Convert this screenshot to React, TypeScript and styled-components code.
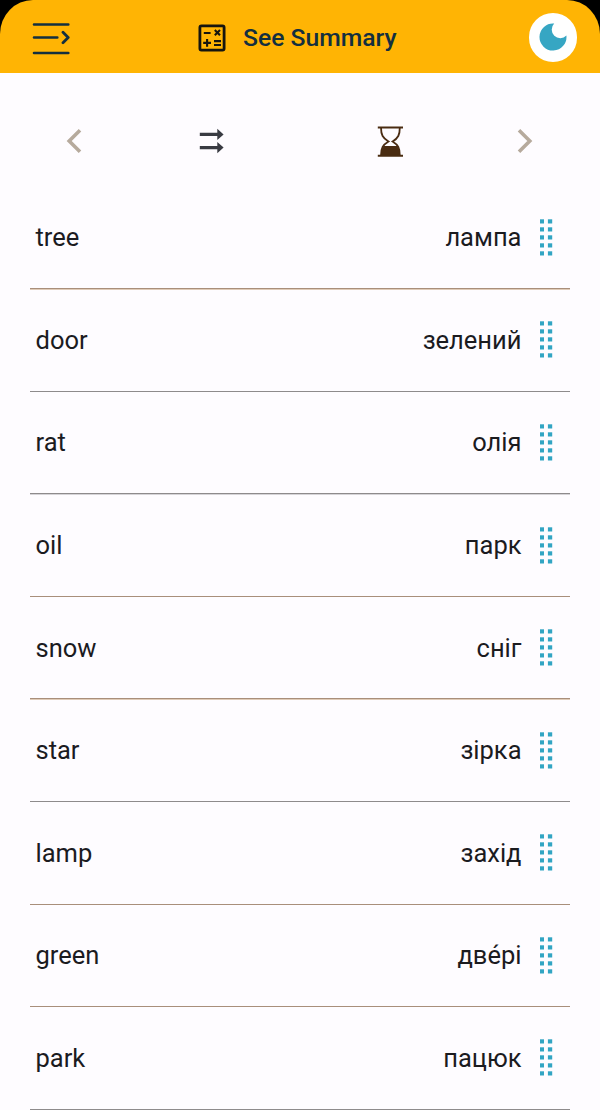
import React from 'react';
import styled, { createGlobalStyle } from 'styled-components';

const GlobalStyle = createGlobalStyle`
  * { box-sizing: border-box; }
  body { margin: 0; background: #000; font-family: Roboto, "Noto Sans", sans-serif; }
  button { border: 0; padding: 0; background: none; display: flex; }
  svg { display: block; }
`;

const Screen = styled.main`
  width: 600px;
  height: 1110px;
  overflow: hidden;
  background: #fefcff;
`;

const HeaderBack = styled.div`
  background: #000;
`;

const Header = styled.header`
  height: 72.5px;
  display: grid;
  grid-template-columns: 120px 1fr 120px;
  align-items: center;
  padding: 5px 23px 0 31px;
  background: #ffb404;
  border-radius: 33px 33px 0 0 / 34px 34px 0 0;
`;

const Title = styled.h1`
  margin: -2px 0 0 -13px;
  display: flex;
  align-items: center;
  justify-content: center;
  gap: 16.5px;
  font-size: 24.7px;
  font-weight: 500;
  line-height: 30px;
  color: #132f3f;
  white-space: nowrap;
`;

const ThemeButton = styled.button`
  justify-self: end;
  width: 48.5px;
  height: 48.5px;
  margin-top: -3px;
  border-radius: 50%;
  background: #fff;
  align-items: center;
  justify-content: center;
`;

const Toolbar = styled.nav`
  height: 114.05px;
  padding: 23px 67px 0 66px;
  display: flex;
  justify-content: space-between;
  align-items: center;
`;

const Actions = styled.div`
  width: 205px;
  margin-right: -1px;
  display: flex;
  justify-content: space-between;
  align-items: center;
`;

const List = styled.ul`
  margin: 0;
  padding: 0 30px;
  list-style: none;
`;

const Row = styled.li<{ $line: string; $edge: string }>`
  height: 102.58px;
  padding: 0 17.5px 0 5.5px;
  display: flex;
  align-items: center;
  border-bottom: 1px solid ${(p) => p.$line};
  box-shadow: 0 1px 0 ${(p) => p.$edge};
`;

const Word = styled.span`
  flex: 1;
  font-size: 25.5px;
  line-height: 32px;
  color: #1b1b1f;
`;

const Translation = styled(Word)`
  flex: none;
  margin-right: 18px;
`;

const MenuIcon = () => (
  <svg width="39" height="34" viewBox="0 0 39 34" fill="none" stroke="#132f3f" strokeWidth="2.6" strokeLinecap="round" strokeLinejoin="round">
    <path d="M3 2.5H37.3M3 15.5H26.3M3 31H37.3" />
    <path d="M32 10.3L37.2 15.5L32 20.7" strokeWidth="2.8" />
  </svg>
);

const SummaryIcon = () => (
  <svg width="28" height="28" viewBox="0 0 28 28" fill="none" stroke="#16150f">
    <rect x="1.9" y="1.9" width="24.2" height="24.2" rx="1.6" strokeWidth="2.8" />
    <path d="M5.8 9H12.6M16.8 6L22 11.2M22 6L16.8 11.2M5.2 18.9H13M9.1 15V22.8M16 17.1H23M16 21H23" strokeWidth="2.1" />
  </svg>
);

const MoonIcon = () => (
  <svg width="28" height="28" viewBox="0 0 28 28">
    <path d="M15.2 .6A13.5 13.5 0 1 0 27.4 12.6A8.2 8.2 0 1 1 15.2 .6Z" fill="#36a6c3" />
  </svg>
);

const Chevron = ({ right }: { right?: boolean }) => (
  <svg width="16" height="26" viewBox="0 0 16 26" fill="none" stroke="#b6aa9d" strokeWidth="3.6">
    <path d={right ? 'M2 2.3L12.8 13L2 23.7' : 'M14 2.3L3.2 13L14 23.7'} />
  </svg>
);

const ArrowsIcon = () => (
  <svg width="26" height="26" viewBox="0 0 26 26" fill="#393b42">
    <path d="M1.8 4.8H19.3V.8L25.6 6.4L19.3 12V8H1.8ZM1.8 18H19.3V14L25.6 19.6L19.3 25.2V21.2H1.8Z" />
  </svg>
);

const HourglassIcon = () => (
  <svg width="26" height="31" viewBox="-0.8 0 26 31" fill="none" stroke="#4a2c12" strokeWidth="1.8">
    <path d="M3.2 1.5C3.2 9 5 12 10.7 15.5C5 19 3.2 22 3.2 29.5M22 1.5C22 9 20.4 12 14.8 15.5C20.4 19 22 22 22 29.5" />
    <path d="M6 20H19.5C21.3 22.5 22 25.5 22 29H3.2C3.2 25.5 4 22.5 6 20Z" fill="#4a2c12" stroke="none" />
    <path d="M0 1.4H25.2M0 29.7H25.2" strokeWidth="2" />
  </svg>
);

const DragIcon = () => (
  <svg width="13" height="37" viewBox="0 0 13 37" fill="#32a5c3">
    {[0, 8, 16, 24, 32].map((y) => (
      <React.Fragment key={y}>
        <rect x="-0.3" y={y + 0.3} width="4.3" height="4.2" />
        <rect x="7.9" y={y + 0.3} width="4.3" height="4.2" />
      </React.Fragment>
    ))}
  </svg>
);

const brown = '#a98f7b';
const grey = '#8e8b8c';
const sand = '#e0cbb8';
const silver = '#d6d4d8';
const none = 'transparent';
const rows = [
  ['tree', 'лампа', brown, sand],
  ['door', 'зелений', grey, none],
  ['rat', 'олія', grey, silver],
  ['oil', 'парк', brown, none],
  ['snow', 'сніг', brown, sand],
  ['star', 'зірка', grey, none],
  ['lamp', 'захід', brown, none],
  ['green', 'две́рі', brown, none],
  ['park', 'пацюк', grey, none],
];

export default function App() {
  return (
    <>
      <GlobalStyle />
      <Screen>
        <HeaderBack>
          <Header>
            <button aria-label="Menu"><MenuIcon /></button>
            <Title><SummaryIcon />See Summary</Title>
            <ThemeButton aria-label="Toggle theme"><MoonIcon /></ThemeButton>
          </Header>
        </HeaderBack>
        <Toolbar>
          <button aria-label="Previous"><Chevron /></button>
          <Actions>
            <button aria-label="Direction"><ArrowsIcon /></button>
            <button aria-label="Timer"><HourglassIcon /></button>
          </Actions>
          <button aria-label="Next"><Chevron right /></button>
        </Toolbar>
        <List>
          {rows.map(([word, translation, line, edge]) => (
            <Row key={word} $line={line} $edge={edge}>
              <Word>{word}</Word>
              <Translation>{translation}</Translation>
              <DragIcon />
            </Row>
          ))}
        </List>
      </Screen>
    </>
  );
}
